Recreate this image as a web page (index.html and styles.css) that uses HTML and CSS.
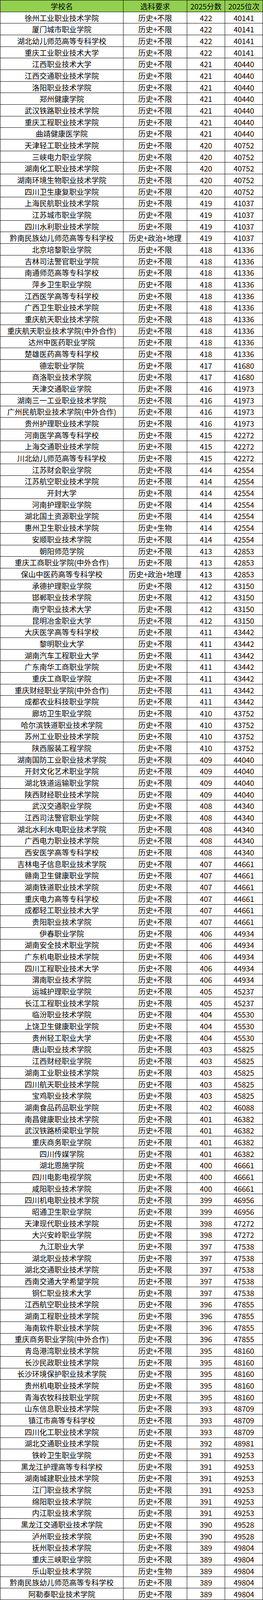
FILE: index.html
```html
<!DOCTYPE html>
<html lang="zh-CN">
<head>
<meta charset="utf-8">
<title>2025分数位次</title>
<link rel="stylesheet" href="styles.css">
</head>
<body>
<table class="score-table">
<thead>
<tr><th>学校名</th><th>选科要求</th><th>2025分数</th><th>2025位次</th></tr>
</thead>
<tbody>
<tr><td>徐州工业职业技术学院</td><td>历史+不限</td><td>422</td><td>40141</td></tr>
<tr><td>厦门城市职业学院</td><td>历史+不限</td><td>422</td><td>40141</td></tr>
<tr><td>湖北幼儿师范高等专科学校</td><td>历史+不限</td><td>422</td><td>40141</td></tr>
<tr><td>重庆工业职业技术大学</td><td>历史+不限</td><td>422</td><td>40141</td></tr>
<tr><td>江西职业技术大学</td><td>历史+不限</td><td>421</td><td>40440</td></tr>
<tr><td>江西交通职业技术学院</td><td>历史+不限</td><td>421</td><td>40440</td></tr>
<tr><td>洛阳职业技术学院</td><td>历史+不限</td><td>421</td><td>40440</td></tr>
<tr><td>郑州健康学院</td><td>历史+不限</td><td>421</td><td>40440</td></tr>
<tr><td>武汉铁路职业技术学院</td><td>历史+不限</td><td>421</td><td>40440</td></tr>
<tr><td>重庆工程职业技术学院</td><td>历史+不限</td><td>421</td><td>40440</td></tr>
<tr><td>曲靖健康医学院</td><td>历史+不限</td><td>421</td><td>40440</td></tr>
<tr><td>天津轻工职业技术学院</td><td>历史+不限</td><td>420</td><td>40752</td></tr>
<tr><td>三峡电力职业学院</td><td>历史+不限</td><td>420</td><td>40752</td></tr>
<tr><td>湖南化工职业技术学院</td><td>历史+不限</td><td>420</td><td>40752</td></tr>
<tr><td>湖南环境生物职业技术学院</td><td>历史+不限</td><td>420</td><td>40752</td></tr>
<tr><td>四川卫生康复职业学院</td><td>历史+不限</td><td>420</td><td>40752</td></tr>
<tr><td>上海民航职业技术学院</td><td>历史+不限</td><td>419</td><td>41037</td></tr>
<tr><td>江苏城市职业学院</td><td>历史+不限</td><td>419</td><td>41037</td></tr>
<tr><td>四川水利职业技术学院</td><td>历史+不限</td><td>419</td><td>41037</td></tr>
<tr><td>黔南民族幼儿师范高等专科学校</td><td>历史+政治+地理</td><td>419</td><td>41037</td></tr>
<tr><td>北京培黎职业学院</td><td>历史+不限</td><td>418</td><td>41336</td></tr>
<tr><td>吉林司法警官职业学院</td><td>历史+不限</td><td>418</td><td>41336</td></tr>
<tr><td>南通师范高等专科学校</td><td>历史+不限</td><td>418</td><td>41336</td></tr>
<tr><td>萍乡卫生职业学院</td><td>历史+不限</td><td>418</td><td>41336</td></tr>
<tr><td>江西医学高等专科学校</td><td>历史+不限</td><td>418</td><td>41336</td></tr>
<tr><td>广西卫生职业技术学院</td><td>历史+不限</td><td>418</td><td>41336</td></tr>
<tr><td>重庆航天职业技术学院</td><td>历史+不限</td><td>418</td><td>41336</td></tr>
<tr><td>重庆航天职业技术学院(中外合作)</td><td>历史+不限</td><td>418</td><td>41336</td></tr>
<tr><td>达州中医药职业学院</td><td>历史+不限</td><td>418</td><td>41336</td></tr>
<tr><td>楚雄医药高等专科学校</td><td>历史+不限</td><td>418</td><td>41336</td></tr>
<tr><td>德宏职业学院</td><td>历史+不限</td><td>417</td><td>41680</td></tr>
<tr><td>商洛职业技术学院</td><td>历史+不限</td><td>417</td><td>41680</td></tr>
<tr><td>天津交通职业学院</td><td>历史+不限</td><td>416</td><td>41973</td></tr>
<tr><td>湖南三一工业职业技术学院</td><td>历史+不限</td><td>416</td><td>41973</td></tr>
<tr><td>广州民航职业技术学院(中外合作)</td><td>历史+不限</td><td>416</td><td>41973</td></tr>
<tr><td>贵州护理职业技术学院</td><td>历史+不限</td><td>416</td><td>41973</td></tr>
<tr><td>河南医学高等专科学校</td><td>历史+不限</td><td>415</td><td>42272</td></tr>
<tr><td>上海交通职业技术学院</td><td>历史+不限</td><td>415</td><td>42272</td></tr>
<tr><td>川北幼儿师范高等专科学校</td><td>历史+不限</td><td>415</td><td>42272</td></tr>
<tr><td>江苏财会职业学院</td><td>历史+不限</td><td>414</td><td>42554</td></tr>
<tr><td>江苏航空职业技术学院</td><td>历史+不限</td><td>414</td><td>42554</td></tr>
<tr><td>开封大学</td><td>历史+不限</td><td>414</td><td>42554</td></tr>
<tr><td>河南护理职业学院</td><td>历史+不限</td><td>414</td><td>42554</td></tr>
<tr><td>湖北国土资源职业学院</td><td>历史+不限</td><td>414</td><td>42554</td></tr>
<tr><td>惠州卫生职业技术学院</td><td>历史+生物</td><td>414</td><td>42554</td></tr>
<tr><td>安顺职业技术学院</td><td>历史+不限</td><td>414</td><td>42554</td></tr>
<tr><td>朝阳师范学院</td><td>历史+不限</td><td>413</td><td>42853</td></tr>
<tr><td>重庆工商职业学院(中外合作)</td><td>历史+不限</td><td>413</td><td>42853</td></tr>
<tr><td>保山中医药高等专科学校</td><td>历史+政治+地理</td><td>413</td><td>42853</td></tr>
<tr><td>承德护理职业学院</td><td>历史+不限</td><td>412</td><td>43150</td></tr>
<tr><td>邯郸职业技术学院</td><td>历史+不限</td><td>412</td><td>43150</td></tr>
<tr><td>南宁职业技术大学</td><td>历史+不限</td><td>412</td><td>43150</td></tr>
<tr><td>昆明冶金职业大学</td><td>历史+不限</td><td>412</td><td>43150</td></tr>
<tr><td>大庆医学高等专科学校</td><td>历史+不限</td><td>411</td><td>43442</td></tr>
<tr><td>黎明职业大学</td><td>历史+不限</td><td>411</td><td>43442</td></tr>
<tr><td>湖南汽车工程职业大学</td><td>历史+不限</td><td>411</td><td>43442</td></tr>
<tr><td>广东南华工商职业学院</td><td>历史+不限</td><td>411</td><td>43442</td></tr>
<tr><td>重庆工商职业学院</td><td>历史+不限</td><td>411</td><td>43442</td></tr>
<tr><td>重庆财经职业学院(中外合作)</td><td>历史+不限</td><td>411</td><td>43442</td></tr>
<tr><td>成都农业科技职业学院</td><td>历史+不限</td><td>411</td><td>43442</td></tr>
<tr><td>廊坊卫生职业学院</td><td>历史+不限</td><td>410</td><td>43752</td></tr>
<tr><td>哈尔滨铁道职业技术学院</td><td>历史+不限</td><td>410</td><td>43752</td></tr>
<tr><td>苏州工业职业技术学院</td><td>历史+不限</td><td>410</td><td>43752</td></tr>
<tr><td>陕西服装工程学院</td><td>历史+不限</td><td>410</td><td>43752</td></tr>
<tr><td>湖南国防工业职业技术学院</td><td>历史+不限</td><td>409</td><td>44040</td></tr>
<tr><td>开封文化艺术职业学院</td><td>历史+不限</td><td>409</td><td>44040</td></tr>
<tr><td>湖北铁道运输职业学院</td><td>历史+不限</td><td>409</td><td>44040</td></tr>
<tr><td>陕西财经职业技术学院</td><td>历史+不限</td><td>409</td><td>44040</td></tr>
<tr><td>武汉交通职业学院</td><td>历史+不限</td><td>408</td><td>44340</td></tr>
<tr><td>江西司法警官职业学院</td><td>历史+不限</td><td>408</td><td>44340</td></tr>
<tr><td>湖北水利水电职业技术学院</td><td>历史+不限</td><td>408</td><td>44340</td></tr>
<tr><td>广西电力职业技术学院</td><td>历史+不限</td><td>408</td><td>44340</td></tr>
<tr><td>西安医学高等专科学校</td><td>历史+不限</td><td>408</td><td>44340</td></tr>
<tr><td>吉林电子信息职业技术学院</td><td>历史+不限</td><td>407</td><td>44661</td></tr>
<tr><td>赣南卫生健康职业学院</td><td>历史+不限</td><td>407</td><td>44661</td></tr>
<tr><td>湖南铁道职业技术学院</td><td>历史+不限</td><td>407</td><td>44661</td></tr>
<tr><td>重庆电力高等专科学校</td><td>历史+不限</td><td>407</td><td>44661</td></tr>
<tr><td>成都轻工职业技术大学</td><td>历史+不限</td><td>407</td><td>44661</td></tr>
<tr><td>贵阳职业技术学院</td><td>历史+不限</td><td>407</td><td>44661</td></tr>
<tr><td>伊春职业学院</td><td>历史+不限</td><td>406</td><td>44934</td></tr>
<tr><td>湖南安全技术职业学院</td><td>历史+不限</td><td>406</td><td>44934</td></tr>
<tr><td>广东机电职业技术学院</td><td>历史+不限</td><td>406</td><td>44934</td></tr>
<tr><td>四川工程职业技术大学</td><td>历史+不限</td><td>406</td><td>44934</td></tr>
<tr><td>渭南职业技术学院</td><td>历史+不限</td><td>406</td><td>44934</td></tr>
<tr><td>运城护理职业学院</td><td>历史+不限</td><td>405</td><td>45237</td></tr>
<tr><td>长江工程职业技术学院</td><td>历史+不限</td><td>405</td><td>45237</td></tr>
<tr><td>临汾职业技术学院</td><td>历史+不限</td><td>404</td><td>45530</td></tr>
<tr><td>上饶卫生健康职业学院</td><td>历史+不限</td><td>404</td><td>45530</td></tr>
<tr><td>贵州轻工职业大学</td><td>历史+不限</td><td>404</td><td>45530</td></tr>
<tr><td>唐山职业技术学院</td><td>历史+不限</td><td>403</td><td>45825</td></tr>
<tr><td>江西财经职业学院</td><td>历史+不限</td><td>403</td><td>45825</td></tr>
<tr><td>湖南工业职业技术学院</td><td>历史+不限</td><td>403</td><td>45825</td></tr>
<tr><td>四川航天职业技术学院</td><td>历史+不限</td><td>403</td><td>45825</td></tr>
<tr><td>宝鸡职业技术学院</td><td>历史+不限</td><td>403</td><td>45825</td></tr>
<tr><td>湖南食品药品职业学院</td><td>历史+不限</td><td>402</td><td>46088</td></tr>
<tr><td>南昌健康职业技术学院</td><td>历史+不限</td><td>401</td><td>46382</td></tr>
<tr><td>武汉铁路桥梁职业学院</td><td>历史+不限</td><td>401</td><td>46382</td></tr>
<tr><td>重庆商务职业学院</td><td>历史+不限</td><td>401</td><td>46382</td></tr>
<tr><td>四川传媒学院</td><td>历史+不限</td><td>401</td><td>46382</td></tr>
<tr><td>湖北恩施学院</td><td>历史+不限</td><td>400</td><td>46661</td></tr>
<tr><td>四川电影电视学院</td><td>历史+不限</td><td>400</td><td>46661</td></tr>
<tr><td>咸阳职业技术学院</td><td>历史+不限</td><td>400</td><td>46661</td></tr>
<tr><td>四川机电职业技术学院</td><td>历史+不限</td><td>399</td><td>46956</td></tr>
<tr><td>昭通卫生职业学院</td><td>历史+不限</td><td>399</td><td>46956</td></tr>
<tr><td>天津现代职业技术学院</td><td>历史+不限</td><td>398</td><td>47272</td></tr>
<tr><td>大兴安岭职业学院</td><td>历史+不限</td><td>398</td><td>47272</td></tr>
<tr><td>九江职业大学</td><td>历史+不限</td><td>397</td><td>47538</td></tr>
<tr><td>湖北职业技术学院</td><td>历史+不限</td><td>397</td><td>47538</td></tr>
<tr><td>湖北交通职业技术学院</td><td>历史+不限</td><td>397</td><td>47538</td></tr>
<tr><td>西南交通大学希望学院</td><td>历史+不限</td><td>397</td><td>47538</td></tr>
<tr><td>铜仁职业技术大学</td><td>历史+不限</td><td>397</td><td>47538</td></tr>
<tr><td>江西航空职业技术学院</td><td>历史+不限</td><td>396</td><td>47855</td></tr>
<tr><td>湖南工程职业技术学院</td><td>历史+不限</td><td>396</td><td>47855</td></tr>
<tr><td>海南软件职业技术学院</td><td>历史+不限</td><td>396</td><td>47855</td></tr>
<tr><td>重庆商务职业学院(中外合作)</td><td>历史+不限</td><td>396</td><td>47855</td></tr>
<tr><td>青岛港湾职业技术学院</td><td>历史+不限</td><td>395</td><td>48160</td></tr>
<tr><td>长沙民政职业技术学院</td><td>历史+不限</td><td>395</td><td>48160</td></tr>
<tr><td>长沙环境保护职业技术学院</td><td>历史+不限</td><td>395</td><td>48160</td></tr>
<tr><td>贵州机电职业技术学院</td><td>历史+不限</td><td>395</td><td>48160</td></tr>
<tr><td>青海农牧科技职业学院</td><td>历史+不限</td><td>395</td><td>48160</td></tr>
<tr><td>山东信息职业技术学院</td><td>历史+不限</td><td>393</td><td>48709</td></tr>
<tr><td>镇江市高等专科学校</td><td>历史+不限</td><td>393</td><td>48709</td></tr>
<tr><td>四川化工职业技术学院</td><td>历史+不限</td><td>393</td><td>48709</td></tr>
<tr><td>湖北交通职业技术学院</td><td>历史+不限</td><td>392</td><td>48981</td></tr>
<tr><td>铁岭卫生职业学院</td><td>历史+不限</td><td>391</td><td>49253</td></tr>
<tr><td>黑龙江护理高等专科学校</td><td>历史+不限</td><td>391</td><td>49253</td></tr>
<tr><td>湖南城建职业技术学院</td><td>历史+不限</td><td>391</td><td>49253</td></tr>
<tr><td>江门职业技术学院</td><td>历史+不限</td><td>391</td><td>49253</td></tr>
<tr><td>绵阳职业技术学院</td><td>历史+不限</td><td>391</td><td>49253</td></tr>
<tr><td>内江职业技术学院</td><td>历史+不限</td><td>391</td><td>49253</td></tr>
<tr><td>黑龙江交通职业技术学院</td><td>历史+不限</td><td>390</td><td>49528</td></tr>
<tr><td>泸州职业技术学院</td><td>历史+不限</td><td>390</td><td>49528</td></tr>
<tr><td>抚州职业技术学院</td><td>历史+不限</td><td>389</td><td>49804</td></tr>
<tr><td>重庆三峡职业学院</td><td>历史+不限</td><td>389</td><td>49804</td></tr>
<tr><td>乐山职业技术学院</td><td>历史+生物</td><td>389</td><td>49804</td></tr>
<tr><td>黔南民族幼儿师范高等专科学校</td><td>历史+不限</td><td>389</td><td>49804</td></tr>
<tr><td>阿勒泰职业技术学院</td><td>历史+不限</td><td>389</td><td>49804</td></tr>
</tbody>
</table>
</body>
</html>
```

FILE: styles.css
```css
html, body {
  margin: 0;
  padding: 0;
  background: #ffffff;
}

/* The table fills the window height; its 138 rows share it evenly. */
.score-table {
  display: grid;
  grid-template-rows: repeat(138, 1fr);
  width: 673px;
  height: 100vh;
  box-sizing: border-box;
  border-left: 1px solid #000000;
  border-top: 1px solid #000000;
  border-collapse: separate;
  border-spacing: 0;
  font-family: "Noto Sans CJK SC", "Noto Sans", sans-serif;
  font-size: 19px;
  color: #000000;
}

.score-table thead,
.score-table tbody {
  display: contents;
}

.score-table tr {
  display: grid;
  grid-template-columns: 315px 163px 97px 97px;
  min-height: 0;
}

.score-table th,
.score-table td {
  display: flex;
  align-items: center;
  justify-content: center;
  box-sizing: border-box;
  min-height: 0;
  padding: 0;
  border-right: 1px solid #000000;
  border-bottom: 1px solid #000000;
  line-height: 1;
  white-space: nowrap;
  overflow: hidden;
  font-weight: normal;
}

.score-table th {
  background: #92d050;
}
```
